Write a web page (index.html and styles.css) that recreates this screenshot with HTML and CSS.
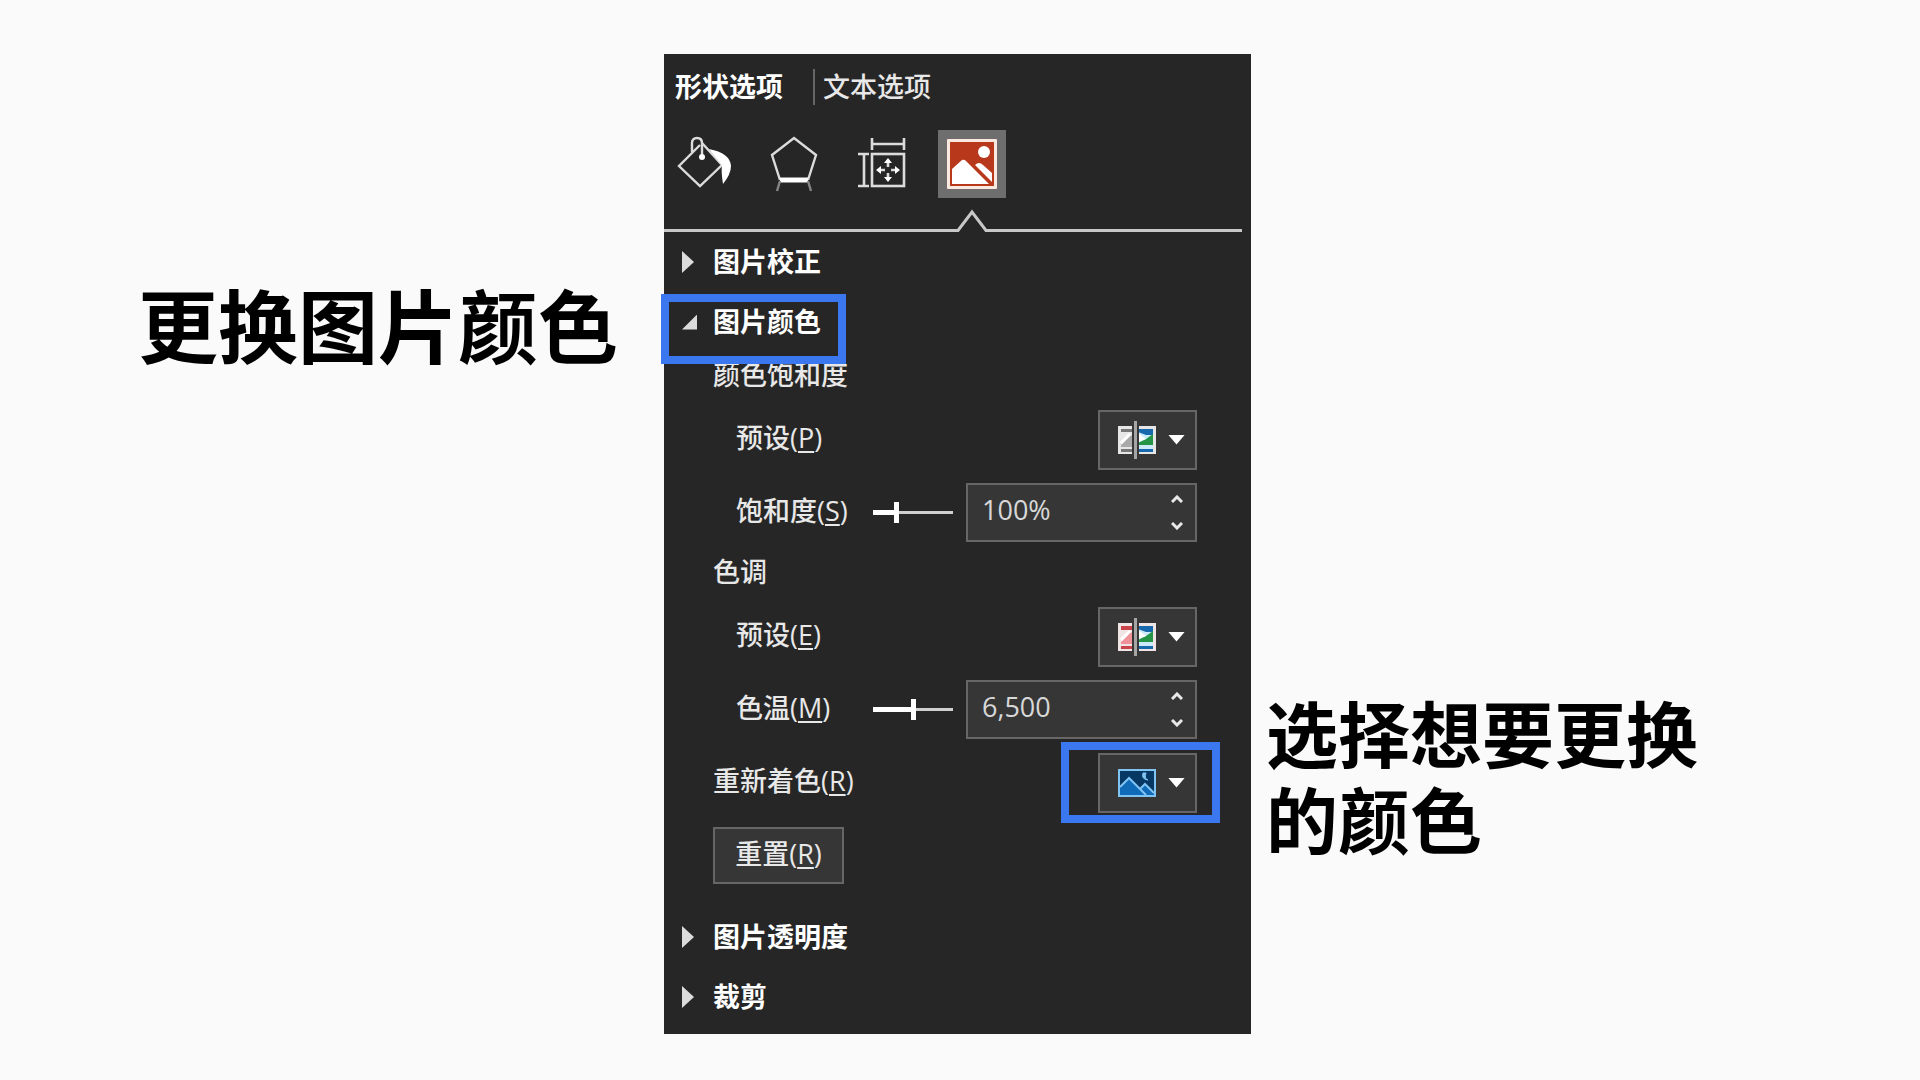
FILE: index.html
```
<!DOCTYPE html>
<html lang="zh-CN">
<head>
<meta charset="UTF-8" />
<meta name="viewport" content="width=device-width, initial-scale=1" />
<title>更换图片颜色</title>
<link rel="stylesheet" href="styles.css">
</head>
<body>

<main class="slide">
  <h1 class="caption caption-left">更换图片颜色</h1>

  <section class="panel">
    <nav class="tabs">
      <button class="tab active">形状选项</button>
      <button class="tab">文本选项</button>
    </nav>

    <div class="tools">
      <button class="tool" aria-label="填充与线条">
        <svg width="56" height="56" viewBox="0 2 56 56" fill="none" stroke="#dcdcdc" stroke-width="2.4">
          <path d="M23 11 L2 32 L23 52 L45 31 L25 9" />
          <path d="M15 18 V9 Q15 4 20 4 Q25 4 25 9 V22" />
          <circle cx="25" cy="23" r="3" fill="#fff" stroke="none" />
          <path d="M32 15 Q53 19 54 32 Q54 40 46 50 Q44 38 45 31 Z" fill="#fff" stroke="none" />
        </svg>
      </button>
      <button class="tool" aria-label="效果">
        <svg width="56" height="56" viewBox="0 2 56 56" fill="none" stroke="#dcdcdc" stroke-width="2.4">
          <path d="M14 46 L6 21 L28 4 L50 21 L42 46" />
          <path d="M14 46 H42" stroke="#fff" stroke-width="5" />
          <path d="M14 47 L11 57 M42 47 L45 57" stroke="#858585" />
        </svg>
      </button>
      <button class="tool" aria-label="大小与属性">
        <svg width="56" height="56" viewBox="0 2 56 56" fill="none" stroke="#dcdcdc" stroke-width="2.6">
          <rect x="17" y="20" width="32" height="32" />
          <path d="M17 4 V16 M49 4 V16 M17 10 H49" />
          <path d="M3 20 H14 M3 52 H14 M9 20 V52" />
          <path d="M33 27 V33 M33 39 V45 M24 36 H30 M36 36 H42" />
          <path d="M33 24 L37 29 H29 Z M33 48 L37 43 H29 Z M21 36 L26 32 V40 Z M45 36 L40 32 V40 Z" fill="#fff" stroke="none" />
        </svg>
      </button>
      <button class="tool selected" aria-label="图片">
        <svg width="52" height="52" viewBox="0 0 52 52">
          <rect x="1" y="1" width="50" height="50" rx="1" fill="#fbe9e0" />
          <rect x="4" y="4" width="44" height="44" fill="#b8381b" />
          <circle cx="38" cy="14" r="6" fill="#fff" />
          <path d="M6 46 V31 L16 22 Q18 21 20 23 L43 46 Z" fill="#fff" />
          <path d="M29 27 Q33 23 37 27 L46 35 V44 Z" fill="#fff" />
        </svg>
        <svg class="caret" width="34" height="24" viewBox="0 0 34 24">
          <path d="M2 20 L17 3 L32 20 V24 H2 Z" fill="#262626" />
          <path d="M0 21.5 H3 L17 3 L31 21.5 H34" fill="none" stroke="#c8c8c8" stroke-width="3" />
        </svg>
      </button>
    </div>
    <div class="rule"></div>

    <h2 class="section"><button><span class="arrow"></span>图片校正</button></h2>
    <h2 class="section highlighted"><button><span class="arrow open"></span>图片颜色</button></h2>

    <div class="group">
      <h3>颜色饱和度</h3>
      <div class="row indent">
        <label for="satPreset">预设(<u>P</u>)</label>
        <button class="picker" id="satPreset">
          <svg width="38" height="38" viewBox="0 0 38 38">
            <rect x="0" y="5" width="38" height="28" fill="#e6e6e6" />
            <path d="M3 8 H16 V11 H3 Z M3 28 H16 V31 H3 Z" fill="#777" />
            <path d="M3 24 L13 14 L16 17 V26 H3 Z" fill="#aaa" />
            <path d="M3 22 L12 13" stroke="#fff" stroke-width="3" />
            <rect x="20" y="8" width="15" height="23" fill="#cdeafa" />
            <path d="M20 8 H35 V14 H28 L20 11 Z M20 28 H35 V31 H20 Z" fill="#1768ac" />
            <path d="M20 22 L28 18 L35 13 V24 H20 Z" fill="#249447" />
            <path d="M20 12 L28 18 L20 21 Z" fill="#fff" />
            <rect x="14" y="0" width="7" height="38" fill="#363636" />
            <rect x="16" y="0" width="3" height="38" fill="#a5a5a5" />
          </svg>
          <span class="drop"></span>
        </button>
      </div>
      <div class="row indent">
        <label for="sat">饱和度(<u>S</u>)</label>
        <input type="range" class="slider sat" min="0" max="400" value="110" aria-label="饱和度" />
        <div class="spin">
          <input type="text" id="sat" value="100%" />
          <div class="steps">
            <button aria-label="增加"><svg width="12" height="8" viewBox="0 0 12 8"><path d="M1 7 L6 2 L11 7" /></svg></button>
            <button aria-label="减少"><svg width="12" height="8" viewBox="0 0 12 8"><path d="M1 1 L6 6 L11 1" /></svg></button>
          </div>
        </div>
      </div>

      <h3>色调</h3>
      <div class="row indent">
        <label for="tonePreset">预设(<u>E</u>)</label>
        <button class="picker" id="tonePreset">
          <svg width="38" height="38" viewBox="0 0 38 38">
            <rect x="0" y="5" width="38" height="28" fill="#f0e4e4" />
            <path d="M3 8 H16 V12 H3 Z M3 28 H16 V31 H3 Z" fill="#c9454b" />
            <path d="M3 24 L13 14 L16 17 V26 H3 Z" fill="#f0929a" />
            <path d="M3 22 L12 13" stroke="#fff" stroke-width="3" />
            <rect x="20" y="8" width="15" height="23" fill="#cdeafa" />
            <path d="M20 8 H35 V14 H28 L20 11 Z M20 28 H35 V31 H20 Z" fill="#1768ac" />
            <path d="M20 22 L28 18 L35 13 V24 H20 Z" fill="#249447" />
            <path d="M20 12 L28 18 L20 21 Z" fill="#fff" />
            <rect x="14" y="0" width="7" height="38" fill="#363636" />
            <rect x="16" y="0" width="3" height="38" fill="#a5a5a5" />
          </svg>
          <span class="drop"></span>
        </button>
      </div>
      <div class="row indent">
        <label for="temp">色温(<u>M</u>)</label>
        <input type="range" class="slider temp" min="1500" max="11500" value="6500" aria-label="色温" />
        <div class="spin">
          <input type="text" id="temp" value="6,500" />
          <div class="steps">
            <button aria-label="增加"><svg width="12" height="8" viewBox="0 0 12 8"><path d="M1 7 L6 2 L11 7" /></svg></button>
            <button aria-label="减少"><svg width="12" height="8" viewBox="0 0 12 8"><path d="M1 1 L6 6 L11 1" /></svg></button>
          </div>
        </div>
      </div>

      <div class="row">
        <label for="recolor">重新着色(<u>R</u>)</label>
        <div class="picked">
          <button class="picker" id="recolor">
            <svg width="38" height="38" viewBox="0 0 38 38">
              <rect x="1" y="6" width="36" height="26" fill="#073763" stroke="#80c4f4" stroke-width="2" />
              <path d="M2 23 L11 14 L22 25 L27 20 L36 28 V31 H2 Z" fill="#0f6ab8" />
              <path d="M2 23 L11 14 L28 31 M22 25 L27 20 L36 29" fill="none" stroke="#80c4f4" stroke-width="2" />
              <path d="M25 9 Q23 15 30 16 Q26 15 28 9 Z" fill="#80c4f4" stroke="#80c4f4" />
            </svg>
            <span class="drop"></span>
          </button>
        </div>
      </div>
      <div class="row">
        <button class="reset">重置(<u>R</u>)</button>
      </div>
    </div>

    <h2 class="section"><button><span class="arrow"></span>图片透明度</button></h2>
    <h2 class="section"><button><span class="arrow"></span>裁剪</button></h2>
  </section>

  <p class="caption caption-right">选择想要更换的颜色</p>
</main>

</body>
</html>
```
FILE: styles.css
```
*, *::before, *::after { box-sizing: border-box; }
body { margin: 0; background: #fafafa; font-family: "Open Sans", "Noto Sans CJK SC", sans-serif; }
button { border: 0; padding: 0; background: none; color: inherit; font: inherit; cursor: pointer; }
u { text-underline-offset: 3px; }

.slide { display: grid; grid-template-columns: 664fr 587fr 669fr; align-items: start; padding: 54px 0 46px; }

/* captions on both sides */
.caption { margin: 0; color: #000; font-family: "Noto Sans CJK SC", sans-serif; font-weight: 700; }
.caption-left { margin-top: 220px; padding-right: 46px; text-align: right; font-size: 80px; line-height: 96px; }
.caption-right { max-width: 480px; margin-top: 634px; padding-left: 15px; font-size: 72px; line-height: 86px; }

/* panel */
.panel { padding-bottom: 7px; background: #262626; color: #e8e8e8; font-size: 27px; font-weight: 500; line-height: 36px; }

.tabs { display: flex; align-items: center; height: 66px; padding-left: 11px; }
.tab.active { padding-right: 30px; border-right: 2px solid #666; color: #fff; font-weight: 700; }
.tab + .tab { padding-left: 8px; }

.tools { display: flex; gap: 21px; padding: 10px 0 0 7px; }
.tool { position: relative; display: flex; align-items: center; justify-content: center; width: 68px; height: 68px; }
.tool svg { overflow: visible; }
.tool.selected { background: #6e6e6e; }
.tool .caret { position: absolute; top: 79px; left: 17px; }
.rule { height: 34px; margin-right: 9px; border-bottom: 3px solid #c8c8c8; }

.section { position: relative; margin: 0; font-size: 27px; font-weight: 700; color: #fff; }
.section button { display: flex; align-items: center; width: 100%; height: 60px; padding-left: 18px; }
.arrow { width: 31px; }
.arrow::before { content: ""; display: block; width: 12px; height: 22px; background: #dcdcdc; clip-path: polygon(0 0, 100% 50%, 0 100%); }
.arrow.open::before { width: 15px; height: 15px; clip-path: polygon(100% 0, 100% 100%, 0 100%); }

/* blue marker frames */
.highlighted::after, .picked::after { content: ""; position: absolute; border: 8px solid #3b78f0; pointer-events: none; }
.highlighted::after { top: 2px; left: -3px; width: 185px; height: 70px; }
.picked { position: relative; }
.picked::after { top: -11px; left: -37px; width: 159px; height: 81px; }

.group { padding: 0 54px 15px 49px; }
.group h3 { margin: 0; padding-bottom: 6px; font-size: 27px; font-weight: 500; line-height: 45px; }
.row { display: flex; align-items: center; height: 73px; }
.row.indent { padding-left: 23px; }
.row label { flex: 1; padding-bottom: 4px; }

.picker { display: flex; align-items: center; gap: 12px; width: 99px; height: 60px; padding-left: 18px; border: 2px solid #666; background: #363636; }
.drop { width: 17px; height: 10px; background: #fff; clip-path: polygon(0 0, 100% 0, 50% 100%); }

.slider { appearance: none; width: 80px; height: 22px; margin: 0 13px 0 0; background: linear-gradient(#fff, #fff) left center / 28% 5px no-repeat, linear-gradient(#d0d0d0, #d0d0d0) center / 100% 3px no-repeat; }
.slider.temp { background-size: 50% 5px, 100% 3px; }
.slider::-webkit-slider-thumb { appearance: none; width: 5px; height: 21px; background: #fff; }
.slider::-moz-range-thumb { width: 5px; height: 21px; border: 0; border-radius: 0; background: #fff; }

.spin { display: flex; width: 231px; height: 59px; border: 2px solid #666; background: #363636; }
.spin input { flex: 1; min-width: 0; padding: 0 0 6px 14px; border: 0; background: none; color: #d8d8d8; font: inherit; }
.steps { display: flex; flex-direction: column; width: 36px; }
.steps button { display: flex; flex: 1; align-items: center; justify-content: center; }
.steps path { fill: none; stroke: #e8e8e8; stroke-width: 3; }

.reset { width: 131px; height: 57px; padding-bottom: 4px; border: 2px solid #666; background: #363636; }
```
